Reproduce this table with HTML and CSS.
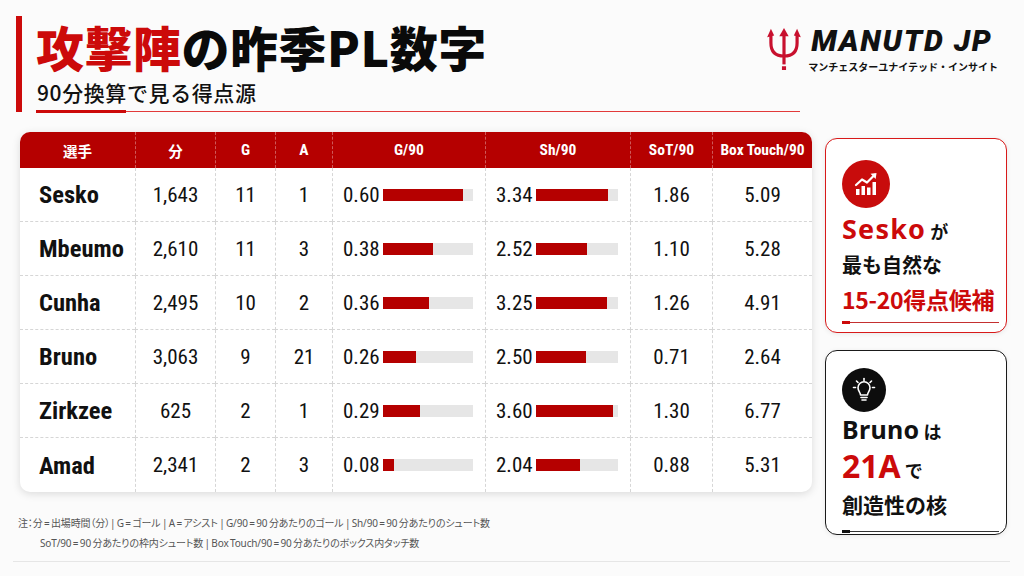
FILE: index.html
```html
<!DOCTYPE html>
<html lang="ja">
<head>
<meta charset="utf-8">
<title>攻撃陣の昨季PL数字</title>
<link rel="stylesheet" href="styles.css">
</head>
<body>
<div class="page">
  <header class="top">
    <div class="title-block">
      <h1 class="title"><span class="red">攻撃陣</span>の昨季PL数字</h1>
      <p class="sub">90分換算で見る得点源</p>
      <div class="rule"></div>
    </div>
    <div class="logo">
      <svg class="trident" viewBox="0 0 36 46" width="34" height="43">
        <g fill="none" stroke="#c8102e" stroke-width="3.4" stroke-linecap="butt">
          <path d="M4 9 V17 Q4 31 18 31 Q32 31 32 17 V9"/>
          <path d="M18 8 V40"/>
        </g>
        <g fill="#c8102e">
          <polygon points="18,1 13,10 23,10"/>
          <polygon points="4,2 0,11 7.5,9"/>
          <polygon points="32,2 36,11 28.5,9"/>
          <rect x="15.8" y="42" width="4.4" height="4"/>
        </g>
      </svg>
      <div class="logo-text">
        <div class="logo-name">MANUTD JP</div>
        <div class="logo-sub">マンチェスターユナイテッド・インサイト</div>
      </div>
    </div>
  </header>

  <main class="main">
    <div class="stats">
      <div class="th jp">選手</div>
      <div class="th jp">分</div>
      <div class="th">G</div>
      <div class="th">A</div>
      <div class="th">G/90</div>
      <div class="th">Sh/90</div>
      <div class="th">SoT/90</div>
      <div class="th">Box Touch/90</div>

      <div class="td name">Sesko</div>
      <div class="td">1,643</div>
      <div class="td">11</div>
      <div class="td">1</div>
      <div class="td bar g"><span class="val">0.60</span><span class="track"><span class="fill" style="width:89%"></span></span></div>
      <div class="td bar s"><span class="val">3.34</span><span class="track"><span class="fill" style="width:88%"></span></span></div>
      <div class="td">1.86</div>
      <div class="td">5.09</div>

      <div class="td name">Mbeumo</div>
      <div class="td">2,610</div>
      <div class="td">11</div>
      <div class="td">3</div>
      <div class="td bar g"><span class="val">0.38</span><span class="track"><span class="fill" style="width:55%"></span></span></div>
      <div class="td bar s"><span class="val">2.52</span><span class="track"><span class="fill" style="width:62%"></span></span></div>
      <div class="td">1.10</div>
      <div class="td">5.28</div>

      <div class="td name">Cunha</div>
      <div class="td">2,495</div>
      <div class="td">10</div>
      <div class="td">2</div>
      <div class="td bar g"><span class="val">0.36</span><span class="track"><span class="fill" style="width:51%"></span></span></div>
      <div class="td bar s"><span class="val">3.25</span><span class="track"><span class="fill" style="width:87%"></span></span></div>
      <div class="td">1.26</div>
      <div class="td">4.91</div>

      <div class="td name">Bruno</div>
      <div class="td">3,063</div>
      <div class="td">9</div>
      <div class="td">21</div>
      <div class="td bar g"><span class="val">0.26</span><span class="track"><span class="fill" style="width:37%"></span></span></div>
      <div class="td bar s"><span class="val">2.50</span><span class="track"><span class="fill" style="width:61%"></span></span></div>
      <div class="td">0.71</div>
      <div class="td">2.64</div>

      <div class="td name">Zirkzee</div>
      <div class="td">625</div>
      <div class="td">2</div>
      <div class="td">1</div>
      <div class="td bar g"><span class="val">0.29</span><span class="track"><span class="fill" style="width:41%"></span></span></div>
      <div class="td bar s"><span class="val">3.60</span><span class="track"><span class="fill" style="width:94%"></span></span></div>
      <div class="td">1.30</div>
      <div class="td">6.77</div>

      <div class="td name last">Amad</div>
      <div class="td last">2,341</div>
      <div class="td last">2</div>
      <div class="td last">3</div>
      <div class="td bar g last"><span class="val">0.08</span><span class="track"><span class="fill" style="width:12%"></span></span></div>
      <div class="td bar s last"><span class="val">2.04</span><span class="track"><span class="fill" style="width:54%"></span></span></div>
      <div class="td last">0.88</div>
      <div class="td last">5.31</div>
    </div>

    <aside class="cards">
      <section class="card card-red">
        <div class="icon icon-red">
          <svg viewBox="0 0 28 28" width="28" height="28">
            <g fill="#fff">
              <rect x="4" y="19" width="3.5" height="6"/>
              <rect x="9.5" y="16" width="3.5" height="9"/>
              <rect x="15" y="17.5" width="3.5" height="7.5"/>
              <rect x="20.5" y="12" width="3.5" height="13"/>
            </g>
            <path d="M4 15 L10 9.5 L15 12.5 L22.5 5" fill="none" stroke="#fff" stroke-width="2.2" stroke-linejoin="round" stroke-linecap="round"/>
            <polygon points="24.5,3 18.5,3.8 23.7,9" fill="#fff"/>
          </svg>
        </div>
        <p class="line l1"><span class="big red">Sesko</span><span class="small">が</span></p>
        <p class="line l2">最も自然な</p>
        <p class="line l3">15-20得点候補</p>
        <div class="card-rule red-rule"></div>
      </section>
      <section class="card card-dark">
        <div class="icon icon-dark">
          <svg viewBox="0 0 28 28" width="28" height="28">
            <g fill="none" stroke="#fff" stroke-width="1.6" stroke-linecap="round" stroke-linejoin="round">
              <path d="M10.5 19 C10.5 16.5 8 15 8 11.8 A6 6 0 0 1 20 11.8 C20 15 17.5 16.5 17.5 19 Z"/>
              <path d="M11 21.5 H17"/>
              <path d="M12 24 H16"/>
              <path d="M14 2.5 V4.5"/>
              <path d="M6.5 5 L8 6.5"/>
              <path d="M21.5 5 L20 6.5"/>
              <path d="M3.5 11.5 H5.5"/>
              <path d="M22.5 11.5 H24.5"/>
            </g>
          </svg>
        </div>
        <p class="line d1"><span class="big2">Bruno</span><span class="small">は</span></p>
        <p class="line d2"><span class="huge red">21A</span><span class="small">で</span></p>
        <p class="line d3">創造性の核</p>
        <div class="card-rule dark-rule"></div>
      </section>
    </aside>
  </main>

  <footer class="notes">
    <p class="note1">注：分 = 出場時間（分）| G = ゴール | A = アシスト | G/90 = 90 分あたりのゴール | Sh/90 = 90 分あたりのシュート数</p>
    <p class="note2">SoT/90 = 90 分あたりの枠内シュート数 | Box Touch/90 = 90 分あたりのボックス内タッチ数</p>
  </footer>
</div>
</body>
</html>
```

FILE: styles.css
```css
* { box-sizing: border-box; }
html, body { margin: 0; padding: 0; }
body {
  width: 1024px;
  height: 576px;
  overflow: hidden;
  background: #fbfbfb;
  font-family: "Noto Sans", "Noto Sans CJK JP", sans-serif;
  color: #111;
}
.page {
  width: 1024px;
  height: 576px;
  display: flex;
  flex-direction: column;
}
.red { color: #cc0a0a; }

/* header */
.top {
  display: flex;
  justify-content: space-between;
  align-items: flex-start;
  height: 132px;
}
.title-block {
  width: 700px;
  flex-shrink: 0;
  margin-top: 16px;
  margin-left: 16px;
  border-left: 6px solid #cc0a0a;
  padding-left: 14px;
  height: 96px;
  display: flex;
  flex-direction: column;
}
.title {
  margin: 0;
  font-family: "Noto Sans CJK JP", sans-serif;
  font-weight: 900;
  font-size: 48px;
  line-height: 60px;
  letter-spacing: 0.5px;
  color: #0a0a0a;
  white-space: nowrap;
}
.sub {
  margin: 4px 0 0 1px;
  font-family: "Noto Sans CJK JP", sans-serif;
  font-weight: 500;
  font-size: 21px;
  line-height: 24px;
  letter-spacing: 0.6px;
  color: #111;
  white-space: nowrap;
}
.rule {
  margin-top: 7px;
  width: 764px;
  flex-shrink: 0;
  height: 1px;
  background: #e23a3a;
  position: relative;
}
.rule::before {
  content: "";
  position: absolute;
  left: 0;
  top: -1px;
  width: 90px;
  height: 3px;
  background: #cc0a0a;
}

.logo {
  flex-shrink: 0;
  margin-top: 27px;
  margin-right: 26px;
  display: flex;
  align-items: flex-start;
  gap: 7px;
}
.trident { display: block; }
.logo-text { white-space: nowrap; }
.logo-name {
  margin-left: 3px;
  font-family: Roboto, "Liberation Sans", sans-serif;
  font-weight: 900;
  font-style: italic;
  font-size: 30px;
  line-height: 28px;
  letter-spacing: 1.8px;
  color: #111;
}
.logo-sub {
  margin-top: 6px;
  font-family: "Noto Sans CJK JP", sans-serif;
  font-weight: 700;
  font-size: 10px;
  line-height: 12px;
  color: #111;
}

/* main */
.main {
  display: flex;
  align-items: flex-start;
  gap: 13px;
  padding-left: 20px;
  height: 380px;
}
.stats {
  width: 792px;
  flex-shrink: 0;
  display: grid;
  grid-template-columns: 115px 80px 60px 57px 153px 145px 82px 100px;
  grid-template-rows: 36px repeat(6, 54px);
  background: #fff;
  border-radius: 10px;
  overflow: hidden;
  box-shadow: 0 2px 8px rgba(0,0,0,0.13);
  font-family: "Liberation Sans Narrow", "Roboto Condensed", "DejaVu Sans Condensed", "Noto Sans CJK JP", sans-serif;
}
.th {
  background: #b50000;
  color: #fff;
  font-weight: 700;
  font-size: 15.5px;
  display: flex;
  align-items: center;
  justify-content: center;
  border-left: 1px dashed rgba(255,255,255,0.35);
}
.th:first-child { border-left: none; }
.th.jp { font-family: "Noto Sans CJK JP", sans-serif; font-size: 14.5px; }
.td {
  display: flex;
  align-items: center;
  justify-content: center;
  font-size: 21px;
  color: #111;
  border-left: 1px dashed #d6d6d6;
  border-bottom: 1px dashed #d6d6d6;
}
.td.last { border-bottom: none; }
.td.name {
  border-left: none;
  justify-content: flex-start;
  padding-left: 19px;
  font-weight: 700;
  font-size: 24.5px;
}
.td.bar {
  justify-content: flex-start;
  padding-left: 10px;
}
.val { width: 40px; }
.track {
  display: block;
  height: 12px;
  background: #e6e6e6;
}
.fill {
  display: block;
  height: 100%;
  background: #b50000;
}
.g .track { width: 90px; }
.s .track { width: 82px; }

/* cards */
.cards {
  display: flex;
  flex-direction: column;
  gap: 17px;
  padding-top: 6px;
}
.card {
  width: 182px;
  border-radius: 12px;
  background: #fff;
  padding: 21px 8px 0 16px;
  display: flex;
  flex-direction: column;
  box-shadow: 0 1px 5px rgba(0,0,0,0.08);
}
.card-red { height: 195px; border: 1.5px solid #d81a1a; }
.card-dark { height: 185px; border: 1.5px solid #1a1a1a; padding-top: 17px; }
.icon {
  flex-shrink: 0;
  border-radius: 50%;
  display: flex;
  align-items: center;
  justify-content: center;
}
.icon-red { width: 48px; height: 48px; background: #c80c0c; }
.icon-dark { width: 44px; height: 44px; background: #0d0d0d; }
.line {
  margin: 0;
  font-weight: 700;
  color: #111;
  font-family: "Noto Sans", "Noto Sans CJK JP", sans-serif;
  white-space: nowrap;
}
.big { font-size: 27px; letter-spacing: 1.2px; }
.big2 { font-size: 25px; letter-spacing: 0.3px; }
.huge { font-size: 32px; }
.small { font-size: 18px; margin-left: 4px; font-family: "Noto Sans CJK JP", sans-serif; }
.l1 { line-height: 38px; margin-top: 2px; }
.l2 { font-size: 20px; line-height: 26px; font-family: "Noto Sans CJK JP", sans-serif; }
.l3 { font-size: 23px; line-height: 42px; font-family: "Noto Sans CJK JP", sans-serif; color: #cc0a0a; letter-spacing: -0.3px; }
.d1 { line-height: 34px; margin-top: 0; }
.d2 { line-height: 32px; }
.d3 { font-size: 21px; line-height: 32px; font-family: "Noto Sans CJK JP", sans-serif; }
.card-rule {
  width: 157px;
  height: 1px;
  position: relative;
  flex-shrink: 0;
}
.red-rule { margin-top: 2px; background: #c43030; }
.dark-rule { margin-top: 11px; background: #333; }
.card-rule::before {
  content: "";
  position: absolute;
  left: 0;
  top: -1px;
  width: 8px;
  height: 3px;
}
.red-rule::before { background: #cc0a0a; }
.dark-rule::before { background: #111; }

/* notes */
.notes {
  padding-left: 18px;
  padding-top: 1px;
  font-family: "Noto Sans", "Noto Sans CJK JP", sans-serif;
  font-weight: 400;
  font-size: 10px;
  color: #555;
  font-feature-settings: "palt";
  letter-spacing: -0.15px;
  word-spacing: -1px;
}
.notes p { margin: 0; line-height: 20px; white-space: nowrap; }
.note2 { padding-left: 22px; }
.notes::after {
  content: "";
  display: block;
  margin-top: 8px;
  margin-left: -5px;
  width: 997px;
  height: 1px;
  background: #e6e6e6;
}
```
